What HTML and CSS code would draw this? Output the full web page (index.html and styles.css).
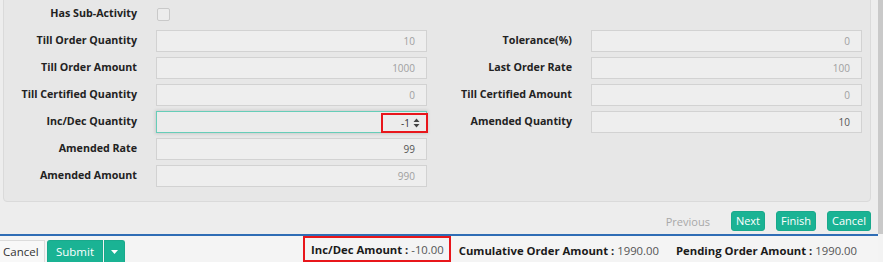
FILE: index.html
```html
<!DOCTYPE html>
<html>
<head>
<meta charset="utf-8">
<link rel="stylesheet" href="styles.css">
</head>
<body>
<div class="page">
  <div class="wizard">
    <div class="main">
      <div class="panel">
        <div class="form">
          <div class="label chk-label">Has Sub-Activity</div>
          <div class="chk-cell"><span class="checkbox"></span></div>
          <div></div><div></div>

          <div class="label">Till Order Quantity</div>
          <div class="input disabled">10</div>
          <div class="label">Tolerance(%)</div>
          <div class="input disabled">0</div>

          <div class="label">Till Order Amount</div>
          <div class="input disabled">1000</div>
          <div class="label">Last Order Rate</div>
          <div class="input disabled">100</div>

          <div class="label">Till Certified Quantity</div>
          <div class="input disabled">0</div>
          <div class="label">Till Certified Amount</div>
          <div class="input disabled">0</div>

          <div class="label">Inc/Dec Quantity</div>
          <div class="input focused">
            <span class="num">-1</span>
            <svg class="spin" width="7" height="10" viewBox="0 0 7 10"><path d="M3.5 0.5 L6.5 4 L0.5 4 Z M0.5 6 L6.5 6 L3.5 9.5 Z" fill="#444"/></svg>
            <span class="hl hl-input"></span>
          </div>
          <div class="label">Amended Quantity</div>
          <div class="input">10</div>

          <div class="label">Amended Rate</div>
          <div class="input">99</div>
          <div></div><div></div>

          <div class="label">Amended Amount</div>
          <div class="input disabled">990</div>
          <div></div><div></div>
        </div>
      </div>
      <div class="actions">
        <span class="prev">Previous</span>
        <button class="btn-green">Next</button>
        <button class="btn-green">Finish</button>
        <button class="btn-green">Cancel</button>
      </div>
    </div>
    <div class="scrollbar"></div>
  </div>
  <div class="footer">
    <button class="btn-cancel">Cancel</button>
    <button class="btn-submit">Submit</button>
    <button class="btn-caret"><svg width="7" height="4" viewBox="0 0 7 4"><path d="M0 0 L7 0 L3.5 4 Z" fill="#fff"/></svg></button>
    <div class="totals">
      <div class="total hl-total"><b>Inc/Dec Amount :</b> -10.00</div>
      <div class="total"><b>Cumulative Order Amount :</b> 1990.00</div>
      <div class="total"><b>Pending Order Amount :</b> 1990.00</div>
    </div>
  </div>
</div>
</body>
</html>
```

FILE: styles.css
```css
* { box-sizing: border-box; }
html, body { margin: 0; padding: 0; }
body {
  width: 883px;
  height: 262px;
  overflow: hidden;
  font-family: "Open Sans", "Liberation Sans", sans-serif;
  background: #f3f3f3;
  color: #333;
}
.page { display: flex; flex-direction: column; height: 262px; }
.wizard { display: flex; height: 235px; background: #ededed; }
.main { width: 878px; display: flex; flex-direction: column; }
.scrollbar { width: 5px; background: #c9c9c9; }
.panel {
  margin: -6px 7px 0 3px;
  height: 208px;
  background: #e7e7e7;
  border: 1px solid #dadada;
  border-radius: 4px;
  padding: 8px 7px 0 0;
}
.form {
  display: grid;
  grid-template-columns: 152px 271px 164px 271px;
  grid-auto-rows: 22px;
  row-gap: 5px;
}
.label {
  font-size: 10.7px;
  font-weight: 700;
  line-height: 16px;
  padding-top: 2px;
  text-align: right;
  padding-right: 19px;
  color: #222;
  white-space: nowrap;
}
.chk-label { padding-top: 2px; }
.chk-cell { padding: 5px 0 0 1px; }
.checkbox {
  display: block;
  width: 13px; height: 13px;
  border: 1px solid #c9c9c9;
  border-radius: 2px;
  background: #ececec;
}
.input {
  position: relative;
  height: 22px;
  border: 1px solid #d2d2d2;
  background: #eeeeee;
  font-size: 10px;
  line-height: 21px;
  text-align: right;
  padding-right: 11px;
  color: #555;
}
.input.disabled { color: #a0a0a0; }
.input.focused {
  border-color: #66cdb8;
  background: #ececec;
  box-shadow: 0 0 3px 1px rgba(0,0,0,0.12);
  display: flex;
  justify-content: flex-end;
  align-items: center;
  gap: 3px;
  padding: 2px 6px 0 0;
  color: #333;
}
.spin { display: block; }
.hl {
  position: absolute;
  border: 2px solid #e8161b;
  pointer-events: none;
}
.hl-input { left: 224px; top: 1px; width: 47px; height: 20px; }
.actions {
  display: flex;
  justify-content: flex-end;
  align-items: center;
  gap: 11px;
  padding: 9px 7px 0 0;
}
.prev { font-size: 11px; color: #a8a8a8; margin-right: 10px; }
.btn-green {
  font-family: inherit;
  font-size: 11px;
  color: #fff;
  background: #1ab394;
  border: 1px solid #19a98c;
  border-radius: 3px;
  height: 20px;
  padding: 0 4px;
  line-height: 18px;
}
.footer {
  flex: 1;
  display: flex;
  align-items: flex-end;
  border-top: 2px solid #2f6db5;
  background: #f4f4f4;
  margin-right: 5px;
}
.btn-cancel {
  flex-shrink: 0;
  font-family: inherit;
  font-size: 11.5px;
  height: 22px;
  width: 45px;
  background: #f8f8f8;
  border: 1px solid #dcdcdc;
  border-left: none;
  border-bottom: none;
  color: #333;
  padding: 0 0 0 3px;
  text-align: left;
  margin-right: 2px;
}
.btn-submit, .btn-caret {
  flex-shrink: 0;
  font-family: inherit;
  font-size: 11.5px;
  height: 22px;
  background: #1ab394;
  border: 1px solid #19a98c;
  border-bottom: none;
  color: #fff;
  padding: 0;
}
.btn-submit { width: 56px; border-radius: 3px 0 0 0; }
.btn-caret { width: 21px; border-radius: 0 3px 0 0; margin-left: 1px; display: flex; align-items: center; justify-content: center; }
.totals {
  display: flex;
  align-self: stretch;
  margin-left: auto;
  margin-right: 21px;
}
.total {
  font-size: 11.3px;
  line-height: 22px;
  padding-left: 8px;
  color: #555;
  white-space: nowrap;
  align-self: flex-end;
}
.total + .total + .total { padding-left: 17px; }
.total b { color: #1a1a1a; }
.hl-total {
  border: 2px solid #e8161b;
  height: 26px;
  padding: 0 5px 0 6px;
  line-height: 24px;
}
```
